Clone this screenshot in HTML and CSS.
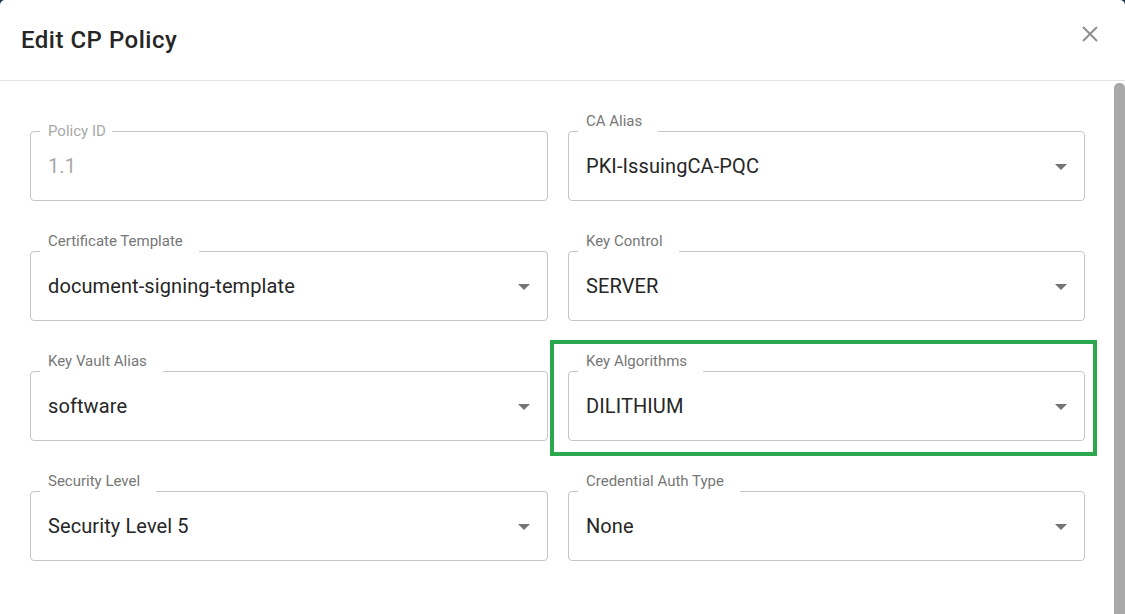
FILE: index.html
```html
<!DOCTYPE html>
<html lang="en">
<head>
  <meta charset="UTF-8">
  <meta name="viewport" content="width=device-width, initial-scale=1.0">
  <title>Edit CP Policy</title>
  <link rel="stylesheet" href="styles.css">
</head>
<body>
  <div class="dialog">
    <div class="dialog-header">
      <h2 class="dialog-title">Edit CP Policy</h2>
      <button class="close-btn" aria-label="Close">
        <svg width="18" height="18" viewBox="0 0 18 18"><path d="M2 2L16 16M16 2L2 16" stroke="#8f8f8f" stroke-width="2" fill="none"/></svg>
      </button>
    </div>

    <div class="dialog-body">
      <form class="form-grid">
        <div class="field disabled">
          <span class="field-label centered">Policy ID</span>
          <div class="field-value">1.1</div>
        </div>
        <div class="field">
          <span class="field-label">CA Alias</span>
          <div class="field-value">PKI-IssuingCA-PQC</div>
          <svg class="arrow" width="12" height="6" viewBox="0 0 12 6"><path d="M0 0L12 0L6 6Z" fill="#757575"/></svg>
        </div>

        <div class="field">
          <span class="field-label">Certificate Template</span>
          <div class="field-value">document-signing-template</div>
          <svg class="arrow" width="12" height="6" viewBox="0 0 12 6"><path d="M0 0L12 0L6 6Z" fill="#757575"/></svg>
        </div>
        <div class="field">
          <span class="field-label">Key Control</span>
          <div class="field-value">SERVER</div>
          <svg class="arrow" width="12" height="6" viewBox="0 0 12 6"><path d="M0 0L12 0L6 6Z" fill="#757575"/></svg>
        </div>

        <div class="field">
          <span class="field-label">Key Vault Alias</span>
          <div class="field-value">software</div>
          <svg class="arrow" width="12" height="6" viewBox="0 0 12 6"><path d="M0 0L12 0L6 6Z" fill="#757575"/></svg>
        </div>
        <div class="field">
          <span class="field-label">Key Algorithms</span>
          <div class="field-value">DILITHIUM</div>
          <svg class="arrow" width="12" height="6" viewBox="0 0 12 6"><path d="M0 0L12 0L6 6Z" fill="#757575"/></svg>
          <div class="highlight"></div>
        </div>

        <div class="field">
          <span class="field-label">Security Level</span>
          <div class="field-value">Security Level 5</div>
          <svg class="arrow" width="12" height="6" viewBox="0 0 12 6"><path d="M0 0L12 0L6 6Z" fill="#757575"/></svg>
        </div>
        <div class="field">
          <span class="field-label">Credential Auth Type</span>
          <div class="field-value">None</div>
          <svg class="arrow" width="12" height="6" viewBox="0 0 12 6"><path d="M0 0L12 0L6 6Z" fill="#757575"/></svg>
        </div>
      </form>
      <div class="scroll-thumb"></div>
    </div>
  </div>
</body>
</html>
```

FILE: styles.css
```css
html, body { margin: 0; height: 100%; }
body {
  background: #17314b;
  font-family: Roboto, "Liberation Sans", Arial, sans-serif;
  overflow: hidden;
}

.dialog {
  background: #fff;
  height: 614px;
  border-radius: 5px 5px 0 0;
  display: flex;
  flex-direction: column;
}

.dialog-header {
  height: 80px;
  border-bottom: 1px solid #e3e3e3;
  display: flex;
  justify-content: space-between;
  padding: 0 26px 0 21px;
  flex-shrink: 0;
}
.dialog-title {
  margin: 0;
  align-self: center;
  font-size: 24px;
  font-weight: 500;
  color: #262626;
  letter-spacing: 0.5px;
}
.close-btn {
  background: none;
  border: none;
  padding: 0;
  margin-top: 25px;
  width: 18px;
  height: 18px;
  align-self: flex-start;
  cursor: pointer;
}

.dialog-body {
  flex: 1;
  display: flex;
  justify-content: space-between;
  padding-top: 1px;
}

.form-grid {
  display: grid;
  grid-template-columns: 518px 517px;
  grid-auto-rows: 70px;
  column-gap: 20px;
  row-gap: 50px;
  padding: 49px 0 0 30px;
  margin: 0;
  align-content: start;
}

.field {
  position: relative;
  border: 1px solid #c6c6c6;
  border-radius: 4px;
  display: flex;
  align-items: center;
  padding: 0 17px;
  box-sizing: border-box;
}
.field-label {
  position: absolute;
  left: 9px;
  top: -21px;
  height: 21px;
  padding: 1px 16px 0 8px;
  box-sizing: border-box;
  background: #fff;
  font-size: 15px;
  line-height: 18px;
  color: #777;
}
.field-label.centered {
  top: -10px;
  height: 18px;
  padding: 0 6px 0 8px;
}
.field-value {
  flex: 1;
  font-size: 20px;
  color: #262626;
  letter-spacing: 0.1px;
}
.field.disabled .field-value,
.field.disabled .field-label { color: #a8a8a8; }
.arrow { flex-shrink: 0; margin-top: 2px; }

.highlight {
  position: absolute;
  left: -19px;
  right: -13px;
  top: -32px;
  bottom: -16px;
  border: 4px solid #2ba84e;
  pointer-events: none;
}

.scroll-thumb {
  width: 11px;
  background: #a9a9a9;
  border-radius: 5px 5px 0 0;
  margin-top: 1px;
}
```
